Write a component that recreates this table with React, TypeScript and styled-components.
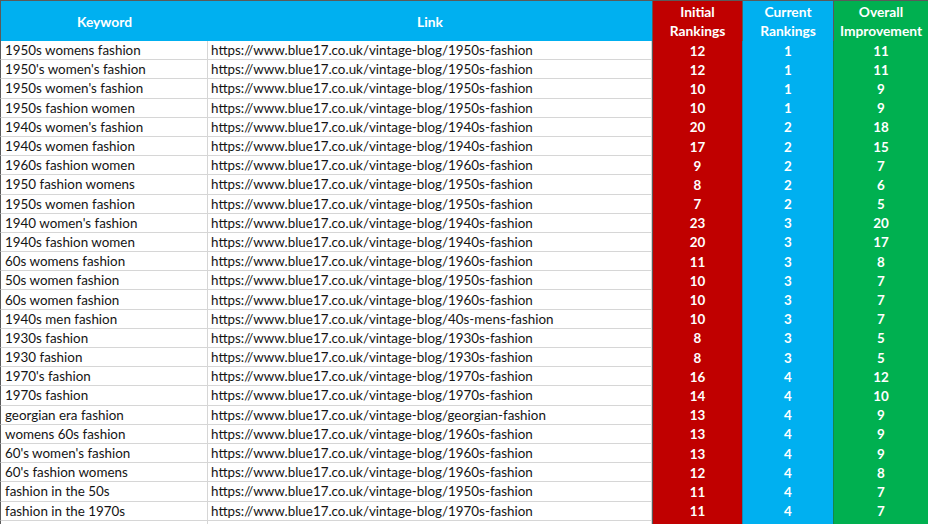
import styled, { createGlobalStyle } from "styled-components"

const GlobalStyle = createGlobalStyle`
  html, body {
    margin: 0;
    padding: 0;
    background: #ffffff;
  }
  body {
    font-family: Lato, "Liberation Sans", Arial, sans-serif;
  }
`

const BLUE = "#00b0f0"
const RED = "#c00000"
const GREEN = "#00b050"

type Tone = "red" | "blue" | "green"
const toneColor: Record<Tone, string> = { red: RED, blue: BLUE, green: GREEN }

const Sheet = styled.div`
  display: grid;
  grid-template-columns: 208px 444px 90px 91px 95px;
  grid-template-rows: 40px;
  grid-auto-rows: 19.2px;
  width: 928px;
  height: 524px;
  overflow: hidden;
  border-top: 1px solid #5a5a5a;
  box-sizing: border-box;
  font-size: 13.4px;
  color: #141414;
`

const HeadCell = styled.div<{ $tone?: Tone; $first?: boolean }>`
  display: flex;
  align-items: center;
  justify-content: center;
  text-align: center;
  background: ${(p) => (p.$tone ? toneColor[p.$tone] : BLUE)};
  color: #ffffff;
  font-weight: 700;
  font-size: 13.8px;
  line-height: 19px;
  border-left: ${(p) => (p.$tone || p.$first ? "1px solid #5a5a5a" : "none")};
  box-sizing: border-box;
`

const TextCell = styled.div<{ $first?: boolean }>`
  display: flex;
  align-items: center;
  padding-left: ${(p) => (p.$first ? "4px" : "3px")};
  border-bottom: 1px solid #d6d6d6;
  border-right: 1px solid #d6d6d6;
  border-left: ${(p) => (p.$first ? "1px solid #5a5a5a" : "none")};
  white-space: nowrap;
  overflow: hidden;
  box-sizing: border-box;
`

const NumCell = styled.div<{ $tone: Tone }>`
  display: flex;
  align-items: center;
  justify-content: center;
  background: ${(p) => toneColor[p.$tone]};
  color: #ffffff;
  font-weight: 700;
  border-left: 1px solid ${(p) => (p.$tone === "red" ? "#5a5a5a" : "rgba(60,60,60,0.35)")};
  box-sizing: border-box;
`

const base = "https://www.blue17.co.uk/vintage-blog/"

const rows: [string, string, number, number, number][] = [
  ["1950s womens fashion", "1950s-fashion", 12, 1, 11],
  ["1950's women's fashion", "1950s-fashion", 12, 1, 11],
  ["1950s women's fashion", "1950s-fashion", 10, 1, 9],
  ["1950s fashion women", "1950s-fashion", 10, 1, 9],
  ["1940s women's fashion", "1940s-fashion", 20, 2, 18],
  ["1940s women fashion", "1940s-fashion", 17, 2, 15],
  ["1960s fashion women", "1960s-fashion", 9, 2, 7],
  ["1950 fashion womens", "1950s-fashion", 8, 2, 6],
  ["1950s women fashion", "1950s-fashion", 7, 2, 5],
  ["1940 women's fashion", "1940s-fashion", 23, 3, 20],
  ["1940s fashion women", "1940s-fashion", 20, 3, 17],
  ["60s womens fashion", "1960s-fashion", 11, 3, 8],
  ["50s women fashion", "1950s-fashion", 10, 3, 7],
  ["60s women fashion", "1960s-fashion", 10, 3, 7],
  ["1940s men fashion", "40s-mens-fashion", 10, 3, 7],
  ["1930s fashion", "1930s-fashion", 8, 3, 5],
  ["1930 fashion", "1930s-fashion", 8, 3, 5],
  ["1970's fashion", "1970s-fashion", 16, 4, 12],
  ["1970s fashion", "1970s-fashion", 14, 4, 10],
  ["georgian era fashion", "georgian-fashion", 13, 4, 9],
  ["womens 60s fashion", "1960s-fashion", 13, 4, 9],
  ["60's women's fashion", "1960s-fashion", 13, 4, 9],
  ["60's fashion womens", "1960s-fashion", 12, 4, 8],
  ["fashion in the 50s", "1950s-fashion", 11, 4, 7],
  ["fashion in the 1970s", "1970s-fashion", 11, 4, 7],
]

export default function App() {
  return (
    <>
      <GlobalStyle />
      <Sheet>
        <HeadCell $first>Keyword</HeadCell>
        <HeadCell>Link</HeadCell>
        <HeadCell $tone="red">Initial<br />Rankings</HeadCell>
        <HeadCell $tone="blue">Current<br />Rankings</HeadCell>
        <HeadCell $tone="green">Overall<br />Improvement</HeadCell>

        {rows.map(([keyword, slug, initial, current, overall], i) => (
          <Row key={i} keyword={keyword} link={base + slug} initial={initial} current={current} overall={overall} />
        ))}
        <Row keyword="" link="" />
      </Sheet>
    </>
  )
}

type RowProps = {
  keyword: string
  link: string
  initial?: number
  current?: number
  overall?: number
}

function Row({ keyword, link, initial, current, overall }: RowProps) {
  return (
    <>
      <TextCell $first>{keyword}</TextCell>
      <TextCell>{link}</TextCell>
      <NumCell $tone="red">{initial}</NumCell>
      <NumCell $tone="blue">{current}</NumCell>
      <NumCell $tone="green">{overall}</NumCell>
    </>
  )
}
